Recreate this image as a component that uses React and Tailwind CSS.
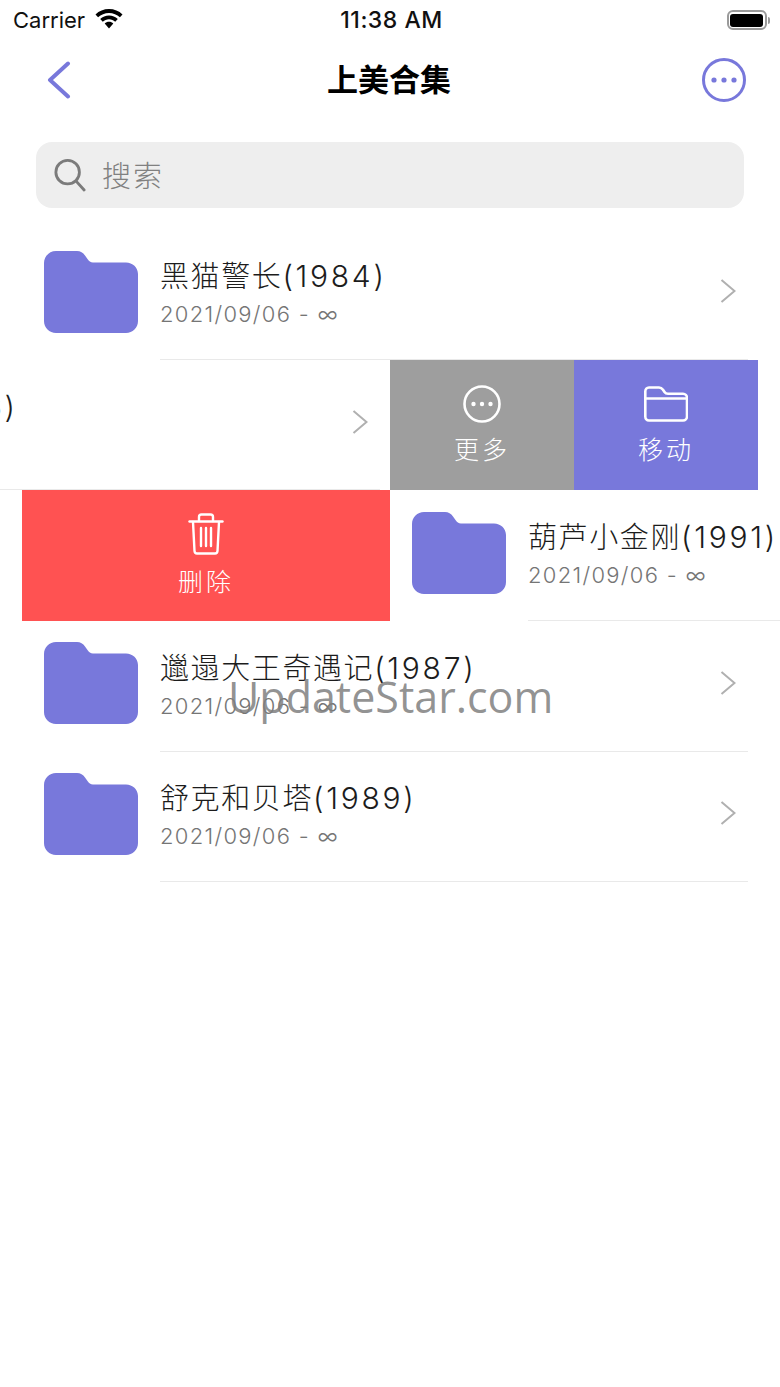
const sans = "font-['Inter','Noto_Sans_CJK_SC',sans-serif]";

function Folder({ className }) {
  return (
    <svg viewBox="0 0 94 82" className={className}>
      <path
        d="M12 0H33c3.5 0 6 1.500 8 4.500l2.500 3.500c1.500 2 3 3.500 5.500 3.500H82c6.600 0 12 5 12 11.500V70c0 6.600-5.400 12-12 12H12C5.400 82 0 76.600 0 70V12C0 5.400 5.400 0 12 0z"
        fill="#7878db"
      />
    </svg>
  );
}

function Cell({ title, year }) {
  return (
    <div className="w-[736px] h-full shrink-0 flex pl-[22px] bg-white">
      <Folder className="w-[94px] h-[82px] mt-[21.4px] mr-[22px] shrink-0" />
      <div className="flex-1 mr-[10px] h-full border-b border-[#e9e9e9] flex items-center justify-between pr-[12px] min-w-0">
        <div className="pb-[2px]">
          <div className="text-[29px] leading-[36px] tracking-[1.6px] text-[#1c1c1c] whitespace-nowrap font-light">
            {title}
            <span className="text-[30px] tracking-[2.7px]">({year})</span>
          </div>
          <div className="mt-[5px] text-[22px] leading-[28px] tracking-[1.3px] text-[#757575] whitespace-nowrap font-light">2021/09/06 - ∞</div>
        </div>
        <svg viewBox="0 0 16 24" className="w-[16px] h-[24px] shrink-0 mb-[6px]" fill="none" stroke="#b0b0b0" strokeWidth="2">
          <path d="M1.500 1l13 11-13 11" />
        </svg>
      </div>
    </div>
  );
}

function Action({ color, width, label, labelGap, children }) {
  return (
    <div className={`${color} ${width} h-full shrink-0 flex flex-col items-center pt-[23px] text-white`}>
      <div className="h-[42px] flex items-center justify-center">{children}</div>
      <div className={`${labelGap} text-[25px] leading-[32px] tracking-[3px] font-light`}>{label}</div>
    </div>
  );
}

export default function App() {
  return (
    <div className={`relative w-[780px] h-[1387px] bg-white overflow-hidden ${sans}`}>
      {/* status bar */}
      <div className="h-[40px] flex items-center justify-between pl-[13px] pr-[10px] text-[#111111]">
        <div className="flex items-center gap-[10px] w-[200px] text-[22px]">
          <span>Carrier</span>
          <svg viewBox="0 0 28 20" className="w-[28px] h-[20px] -mt-[2px]" fill="#000000">
            <path d="M14 0C8.800 0 4 2 .5 5.400l2.600 2.800C6 5.500 9.800 3.900 14 3.900s8 1.600 10.900 4.300l2.600-2.800C24 2 19.200 0 14 0z" />
            <path d="M14 6.400c-3.400 0-6.500 1.300-8.800 3.500l2.600 2.800c1.600-1.500 3.800-2.400 6.200-2.400s4.600.9 6.200 2.400l2.600-2.800c-2.300-2.200-5.400-3.500-8.800-3.500z" />
            <path d="M14 12.800c-1.700 0-3.200.6-4.300 1.700L14 19.500l4.300-5c-1.100-1.100-2.600-1.700-4.300-1.700z" />
          </svg>
        </div>
        <span className="font-medium tracking-[0.5px] text-[23px]">11:38 AM</span>
        <div className="w-[200px] flex justify-end items-center">
          <div className="w-[40px] h-[20px] rounded-[6px] border-2 border-[#9a9a9a] p-[1.5px]">
            <div className="w-full h-full rounded-[3px] bg-black" />
          </div>
          <div className="w-[2px] h-[7px] ml-[1px] rounded-r-full bg-[#9a9a9a]" />
        </div>
      </div>

      {/* nav bar */}
      <div className="h-[79px] flex items-center justify-between pl-[47px] pr-[34px]">
        <div className="w-[100px]">
          <svg viewBox="0 0 24 38" className="w-[24px] h-[38px]" fill="none" stroke="#7878db" strokeWidth="4" strokeLinecap="round" strokeLinejoin="round">
            <path d="M21 2.500 3 19l18 16.500" />
          </svg>
        </div>
        <div className="text-[31px] leading-[40px] font-bold text-black -ml-[15px]">上美合集</div>
        <div className="w-[100px] flex justify-end">
          <svg viewBox="0 0 44 44" className="w-[44px] h-[44px]" fill="#7878db">
            <circle cx="22" cy="22" r="20.500" fill="none" stroke="#7878db" strokeWidth="3" />
            <circle cx="12" cy="22" r="2.600" />
            <circle cx="22" cy="22" r="2.600" />
            <circle cx="32" cy="22" r="2.600" />
          </svg>
        </div>
      </div>

      {/* search */}
      <div className="mt-[23px] mx-[36px] h-[66px] rounded-[16px] bg-[#eeeeee] flex items-center pl-[18px]">
        <svg viewBox="0 0 34 36" className="w-[32px] h-[34px]" fill="none" stroke="#7b7b7b" strokeWidth="3" strokeLinecap="round">
          <circle cx="14.500" cy="15" r="12.500" />
          <path d="M23.500 24.500l8.500 9.500" />
        </svg>
        <span className="ml-[16px] pt-[3px] text-[29px] tracking-[2px] text-[#808080] font-light">搜索</span>
      </div>

      {/* list */}
      <div className="mt-[21.3px]">
        <div className="h-[130.6px] overflow-hidden flex pl-[22px]">
          <Cell title="黑猫警长" year="1984" />
        </div>
        <div className="h-[130.6px] overflow-hidden flex -ml-[346px] w-[1126px]">
          <Cell title="葫芦兄弟" year="1986" />
          <Action color="bg-[#9e9e9e]" width="w-[184px]" label="更多" labelGap="mt-[9px]">
            <svg viewBox="0 0 38 38" className="w-[38px] h-[38px]" fill="#ffffff">
              <circle cx="19" cy="19" r="17.500" fill="none" stroke="#ffffff" strokeWidth="2.600" />
              <circle cx="10.500" cy="19" r="2.200" />
              <circle cx="19" cy="19" r="2.200" />
              <circle cx="27.500" cy="19" r="2.200" />
            </svg>
          </Action>
          <Action color="bg-[#7878db]" width="w-[184px]" label="移动" labelGap="mt-[9px]">
            <svg viewBox="0 0 44 36" className="w-[44px] h-[36px]" fill="none" stroke="#ffffff" strokeWidth="2.600" strokeLinejoin="round">
              <path d="M5 1.500h10c2 0 3 .8 4 2.200l1.500 2.300c.8 1.200 1.800 1.800 3.500 1.800h15c2.200 0 4 1.800 4 4V30.500c0 2.200-1.800 4-4 4H5c-2.200 0-3.700-1.800-3.700-4V5.500c0-2.200 1.500-4 3.700-4z" />
              <path d="M1.500 12.500h41" />
            </svg>
          </Action>
        </div>
        <div className="h-[130.6px] overflow-hidden flex pl-[22px]">
          <Action color="bg-[#ff5252]" width="w-[368px]" label="删除" labelGap="mt-[11px]">
            <svg viewBox="0 0 36 42" className="w-[36px] h-[42px]" fill="none" stroke="#ffffff" strokeWidth="2.400" strokeLinecap="round" strokeLinejoin="round">
              <path d="M1.500 8.500h33" />
              <path d="M11 8V4c0-1.500 1-2.500 2.500-2.500h9C24 1.500 25 2.500 25 4v4" />
              <path d="M5 9l1.500 29c.1 1.500 1 2.500 2.500 2.500h18c1.500 0 2.400-1 2.500-2.500L31 9" />
              <path d="M13 15v18M18 15v18M23 15v18" />
            </svg>
          </Action>
          <Cell title="葫芦小金刚" year="1991" />
        </div>
        <div className="h-[130.6px] overflow-hidden flex pl-[22px]">
          <Cell title="邋遢大王奇遇记" year="1987" />
        </div>
        <div className="h-[130.6px] overflow-hidden flex pl-[22px]">
          <Cell title="舒克和贝塔" year="1989" />
        </div>
      </div>

      {/* watermark */}
      <div className="absolute left-[228px] top-[669px] text-[43px] leading-[56px] text-[#7f7f7f]/85 font-['Open_Sans',sans-serif]">UpdateStar.com</div>
    </div>
  );
}
